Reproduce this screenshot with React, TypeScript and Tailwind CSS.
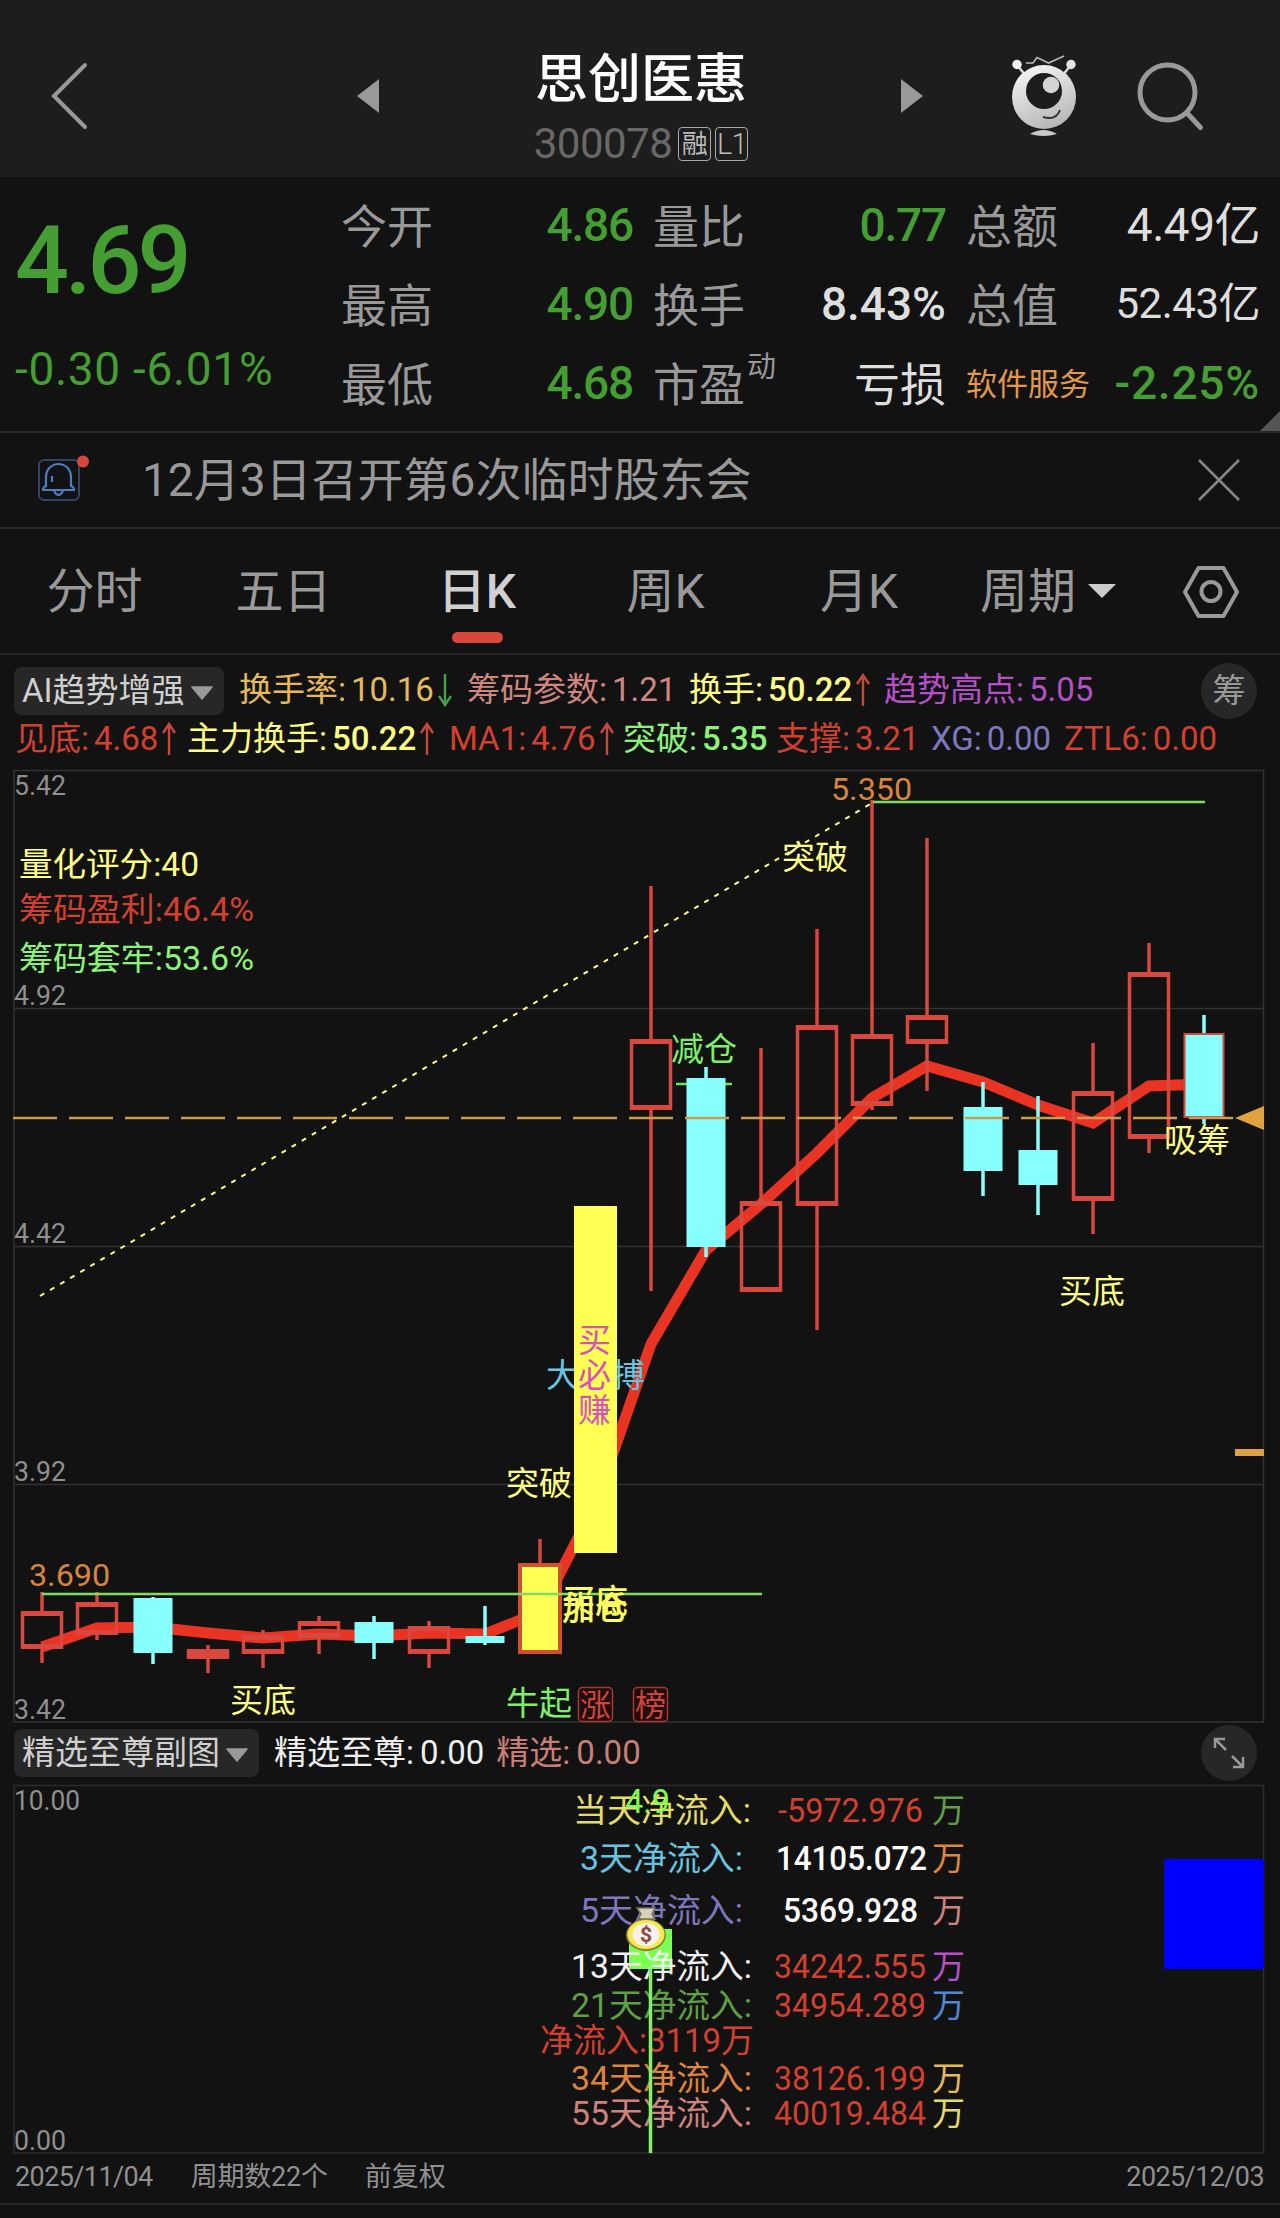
import React from 'react';

interface Quote {
  label: string;
  sup?: string;
  value: string;
  labelClass?: string;
  valueClass: string;
}

interface Indicator {
  name: string;
  value: string;
  width: string;
  color: string;
  bold?: boolean;
  trend?: 'up' | 'down';
}

interface Candle {
  high: number;
  top: number;
  bottom: number;
  low: number;
  kind: 'up' | 'down' | 'signal' | 'solid' | 'last';
}

const GREEN = 'text-[#459e31] font-medium tracking-[-1.2px]';
const LIGHT = 'text-[#dedede] font-medium tracking-[0px]';

const quoteColumns: { width: string; rows: Quote[] }[] = [
  {
    width: 'w-[292px]',
    rows: [
      { label: '今开', value: '4.86', valueClass: GREEN },
      { label: '最高', value: '4.90', valueClass: GREEN },
      { label: '最低', value: '4.68', valueClass: GREEN },
    ],
  },
  {
    width: 'w-[293px]',
    rows: [
      { label: '量比', value: '0.77', valueClass: GREEN },
      { label: '换手', value: '8.43%', valueClass: LIGHT },
      { label: '市盈', sup: '动', value: '亏损', valueClass: 'text-[#dedede] pt-1' },
    ],
  },
  {
    width: 'w-[294px]',
    rows: [
      { label: '总额', value: '4.49亿', valueClass: 'text-[#dedede] text-[46px] tracking-[-0.5px]' },
      { label: '总值', value: '52.43亿', valueClass: 'text-[#dedede] text-[42px] tracking-[-0.5px]' },
      { label: '软件服务', value: '-2.25%', labelClass: 'text-[#e09850] text-[31px]', valueClass: 'text-[#459e31] font-medium tracking-[0.8px]' },
    ],
  },
];

const tabs = [
  { name: '分时', width: 'w-[189px]' },
  { name: '五日', width: 'w-[189px]' },
  { name: '日K', width: 'w-[198px]', active: true },
  { name: '周K', width: 'w-[179px]' },
  { name: '月K', width: 'w-[208px]' },
];

const indicatorsTop: Indicator[] = [
  { name: '换手率', value: '10.16', width: 'w-[228px]', color: 'text-[#e5b85a]', trend: 'down' },
  { name: '筹码参数', value: '1.21', width: 'w-[222px]', color: 'text-[#d08680]' },
  { name: '换手', value: '50.22', width: 'w-[195px]', color: 'text-[#ffff84]', bold: true, trend: 'up' },
  { name: '趋势高点', value: '5.05', width: 'w-[220px]', color: 'text-[#b44fc6]' },
];

const indicatorsBottom: Indicator[] = [
  { name: '见底', value: '4.68', width: 'w-[172px]', color: 'text-[#d3402f]', trend: 'up' },
  { name: '主力换手', value: '50.22', width: 'w-[262px]', color: 'text-[#ffff84]', bold: true, trend: 'up' },
  { name: 'MA1', value: '4.76', width: 'w-[174px]', color: 'text-[#d3402f]', trend: 'up' },
  { name: '突破', value: '5.35', width: 'w-[153px]', color: 'text-[#8cf27a]', bold: true },
  { name: '支撑', value: '3.21', width: 'w-[155px]', color: 'text-[#d3402f]' },
  { name: 'XG', value: '0.00', width: 'w-[133px]', color: 'text-[#7d78bd]' },
  { name: 'ZTL6', value: '0.00', width: 'w-[160px]', color: 'text-[#d3402f]' },
];

const candles: Candle[] = [
  { high: 1592, top: 1611, bottom: 1649, low: 1663, kind: 'up' },
  { high: 1592, top: 1602, bottom: 1635, low: 1640, kind: 'up' },
  { high: 1597, top: 1598, bottom: 1653, low: 1664, kind: 'down' },
  { high: 1645, top: 1649, bottom: 1659, low: 1673, kind: 'up' },
  { high: 1630, top: 1635, bottom: 1654, low: 1668, kind: 'up' },
  { high: 1616, top: 1621, bottom: 1638, low: 1654, kind: 'up' },
  { high: 1616, top: 1622, bottom: 1643, low: 1659, kind: 'down' },
  { high: 1621, top: 1626, bottom: 1654, low: 1668, kind: 'up' },
  { high: 1606, top: 1636, bottom: 1643, low: 1645, kind: 'down' },
  { high: 1539, top: 1563, bottom: 1654, low: 1654, kind: 'signal' },
  { high: 1206, top: 1206, bottom: 1553, low: 1553, kind: 'solid' },
  { high: 886, top: 1039, bottom: 1110, low: 1291, kind: 'up' },
  { high: 1067, top: 1078, bottom: 1247, low: 1257, kind: 'down' },
  { high: 1048, top: 1201, bottom: 1292, low: 1292, kind: 'up' },
  { high: 929, top: 1025, bottom: 1206, low: 1330, kind: 'up' },
  { high: 800, top: 1034, bottom: 1106, low: 1110, kind: 'up' },
  { high: 838, top: 1015, bottom: 1044, low: 1091, kind: 'up' },
  { high: 1082, top: 1107, bottom: 1171, low: 1196, kind: 'down' },
  { high: 1096, top: 1150, bottom: 1185, low: 1215, kind: 'down' },
  { high: 1043, top: 1091, bottom: 1201, low: 1234, kind: 'up' },
  { high: 943, top: 972, bottom: 1139, low: 1153, kind: 'up' },
  { high: 1015, top: 1034, bottom: 1117, low: 1124, kind: 'last' },
];

const maValues = [
  1647, 1628, 1627, 1633, 1638, 1634, 1636, 1633, 1634, 1612, 1505, 1344, 1250, 1204, 1153, 1098, 1066, 1082, 1105, 1123,
  1086, 1084,
];

const candleX = (i: number) => Math.round(42 + i * 55.33);

const flows = [
  { y: 1822, label: '当天净流入:', x: 573, w: 178, color: '#e3dc66', value: '-5972.976', vx: 778, vw: 145, vColor: '#d3402f', unit: '#5f9f45' },
  { y: 1870, label: '3天净流入:', x: 580, w: 163, color: '#69c3e0', value: '14105.072', vx: 776, vw: 151, vColor: '#ffffff', unit: '#de8440' },
  { y: 1922, label: '5天净流入:', x: 580, w: 163, color: '#7d78bd', value: '5369.928', vx: 783, vw: 135, vColor: '#ffffff', unit: '#cf827c' },
  { y: 1978, label: '13天净流入:', x: 571, w: 181, color: '#f2f2f2', value: '34242.555', vx: 774, vw: 152, vColor: '#d3402f', unit: '#b44fc6' },
  { y: 2017, label: '21天净流入:', x: 571, w: 181, color: '#5f9f45', value: '34954.289', vx: 774, vw: 152, vColor: '#d3402f', unit: '#4f87d6' },
  { y: 2090, label: '34天净流入:', x: 571, w: 181, color: '#de8440', value: '38126.199', vx: 774, vw: 152, vColor: '#d3402f', unit: '#e5b85a' },
  { y: 2125, label: '55天净流入:', x: 571, w: 181, color: '#cf827c', value: '40019.484', vx: 774, vw: 152, vColor: '#d3402f', unit: '#e3dc66' },
];

interface NoteProps {
  x: number;
  y: number;
  w: number;
  color: string;
  size?: number;
  weight?: number;
  children: React.ReactNode;
}

function Note({ x, y, w, color, size = 33, weight = 400, children }: NoteProps) {
  return (
    <text x={x} y={y} fill={color} fontSize={size} fontWeight={weight} textLength={w} lengthAdjust="spacingAndGlyphs">
      {children}
    </text>
  );
}

function TrendArrow({ trend }: { trend: 'up' | 'down' }) {
  const up = trend === 'up';
  return (
    <svg width="16" height="34" viewBox="0 0 16 34" fill="none" stroke={up ? '#c9463c' : '#4a9d4f'} strokeWidth="2.4">
      <path d={up ? 'M8 33V2M2 11L8 2L14 11' : 'M8 1V32M2 23L8 32L14 23'} />
    </svg>
  );
}

function IndicatorItem({ item }: { item: Indicator }) {
  return (
    <div className={`flex shrink-0 items-center whitespace-nowrap text-[33px] leading-10 ${item.width} ${item.color}`}>
      <span>{item.name}:</span>
      <span className={`ml-[5px] ${item.bold ? 'font-medium' : ''}`}>{item.value}</span>
      {item.trend && (
        <span className="ml-[3px]">
          <TrendArrow trend={item.trend} />
        </span>
      )}
    </div>
  );
}

function PickerButton({ label, width }: { label: string; width: string }) {
  return (
    <button className={`flex h-12 shrink-0 items-center whitespace-nowrap rounded-lg bg-[#272727] pl-2 text-[33px] leading-10 text-[#d0d0d0] ${width}`}>
      {label}
      <svg className="ml-1.5 mt-1" width="22" height="14" viewBox="0 0 22 14">
        <path d="M1 1H21L11 13Z" fill="#999" stroke="#999" strokeWidth="1.5" strokeLinejoin="round" />
      </svg>
    </button>
  );
}

function CandleShape({ candle, x }: { candle: Candle; x: number }) {
  const { high, top, bottom, low, kind } = candle;
  const height = bottom - top;
  if (kind === 'solid') {
    return <rect x={574} y={top} width={43} height={height} fill="#ffff54" />;
  }
  if (kind === 'signal') {
    return (
      <g>
        <path d={`M${x} ${high}V${top}`} stroke="#d0473c" strokeWidth="3.5" />
        <rect x={x - 20} y={top + 2} width={40} height={height - 4} fill="#ffff54" stroke="#d2502f" strokeWidth="4" />
      </g>
    );
  }
  if (kind === 'up') {
    return (
      <g stroke="#d8483f" fill="none">
        <path d={`M${x} ${high}V${top}M${x} ${bottom}V${low}`} strokeWidth="3.5" />
        <path d={`M${x - 19.5} ${top}V${bottom}M${x + 19.5} ${top}V${bottom}`} strokeWidth="3.5" />
        <path d={`M${x - 21} ${top + 2.5}H${x + 21}M${x - 21} ${bottom - 2.5}H${x + 21}`} strokeWidth="5" />
      </g>
    );
  }
  return (
    <g>
      <path d={`M${x} ${high}V${low}`} stroke="#88ffff" strokeWidth="3.5" />
      <rect
        x={x - 19.5}
        y={top}
        width={39}
        height={height}
        fill="#88ffff"
        stroke={kind === 'last' ? '#d8483f' : 'none'}
        strokeWidth="2"
      />
    </g>
  );
}

function Header() {
  return (
    <header className="flex h-[177px] items-start bg-[#1d1d1d]">
      <svg className="ml-[50px] mt-[62px]" width="38" height="68" viewBox="0 0 38 68" fill="none" stroke="#999" strokeWidth="4">
        <path d="M35 3L4 34L35 65" strokeLinecap="round" />
      </svg>
      <svg className="ml-[269px] mt-[79px]" width="22" height="34" viewBox="0 0 22 34" fill="#999">
        <path d="M0 17L22 0V34Z" />
      </svg>
      <div className="ml-[154px] mt-[50px] flex w-[216px] flex-col items-center">
        <h1 className="whitespace-nowrap text-[53px] font-medium leading-[60px] text-white">思创医惠</h1>
        <div className="mt-4 flex h-9 items-center gap-1 text-[#bbb]">
          <span className="mr-0.5 text-[42px] leading-9 tracking-[-0.5px] text-[#686868]">300078</span>
          <span className="flex h-[34px] w-[33px] shrink-0 items-center justify-center rounded border border-[#aaa] text-[26px] leading-8">融</span>
          <span className="flex h-[34px] w-[33px] shrink-0 items-center justify-center rounded border border-[#aaa] text-[29px] font-light leading-8 tracking-[-1px]">L1</span>
        </div>
      </div>
      <svg className="ml-[152px] mt-[79px]" width="22" height="34" viewBox="0 0 22 34" fill="#999">
        <path d="M22 17L0 0V34Z" />
      </svg>
      {/* Assistant mascot */}
      <svg className="ml-[87px] mt-[50px]" width="68" height="90" viewBox="1010 50 68 90" fill="none">
        <defs>
          <linearGradient id="mascot" x1="0.3" y1="0" x2="0.7" y2="1">
            <stop offset="0" stopColor="#f4f4f4" />
            <stop offset="1" stopColor="#b4b4b4" />
          </linearGradient>
        </defs>
        <path d="M1017 65L1026 76M1071 65L1062 76" stroke="#ddd" strokeWidth="2.5" />
        <circle cx="1017" cy="64.5" r="4.7" fill="#f4f4f4" />
        <circle cx="1071" cy="64.5" r="4.7" fill="#e4e4e4" />
        <path d="M1026 63H1033L1037 57.5L1048.5 63L1064 56" stroke="#b8b8b8" strokeWidth="1.6" />
        <circle cx="1044" cy="97" r="32" fill="url(#mascot)" />
        <circle cx="1044" cy="91" r="18" fill="#1d1d1d" />
        <circle cx="1051" cy="85" r="8.3" fill="#d4d4d4" />
        <path d="M1043 117Q1056 121 1060 110" stroke="#333" strokeWidth="2" />
        <path d="M1030 134Q1043.5 126 1057 134Q1043.5 138 1030 134Z" fill="#c8c8c8" />
      </svg>
      <svg className="ml-[57px] mt-[60px]" width="70" height="72" viewBox="0 0 70 72" fill="none" stroke="#999" strokeWidth="5">
        <circle cx="32.5" cy="32.5" r="27.5" />
        <path d="M52 53L65.5 67.5" strokeLinecap="round" />
      </svg>
    </header>
  );
}

function QuotePanel() {
  return (
    <section className="relative flex h-[256px] border-b-2 border-[#262626]">
      <div className="w-[341px] shrink-0 whitespace-nowrap pl-[15px] pt-9 text-[#459e31]">
        <p className="text-[95px] font-medium leading-[96px] tracking-[-4px]">4.69</p>
        <p className="mt-9 text-[46px] leading-[48px] tracking-[0.7px]">-0.30 -6.01%</p>
      </div>
      <div className="flex gap-5 pt-2.5">
        {quoteColumns.map((column, i) => (
          <div key={i} className={column.width}>
            {column.rows.map(row => (
              <div key={row.label} className="flex h-[79px] items-center justify-between whitespace-nowrap text-[46px] leading-[60px]">
                <span className={`relative ${row.labelClass ?? 'text-[#999]'}`}>
                  {row.label}
                  {row.sup && <span className="absolute -top-[18px] left-[94px] text-[29px]">{row.sup}</span>}
                </span>
                <span className={`pb-1 ${row.valueClass}`}>{row.value}</span>
              </div>
            ))}
          </div>
        ))}
      </div>
      <svg className="absolute bottom-0 right-0" width="20" height="20" viewBox="0 0 20 20">
        <path d="M20 0V20H0Z" fill="#555" />
      </svg>
    </section>
  );
}

function NoticeBar() {
  return (
    <section className="flex h-24 items-center border-b-2 border-[#262626] pl-[38px]">
      <svg className="mb-1" width="54" height="48" viewBox="38 454 54 48" fill="none" stroke="#4a7fc4" strokeWidth="2.2">
        <rect x="39" y="460" width="40" height="40" rx="5" stroke="#2f4569" strokeWidth="2" />
        <path d="M46 486V477C46 469 52 464 58.500 464S71 469 71 477V486Q74 487 74 490H43Q43 487 46 486Z" strokeLinejoin="round" />
        <path d="M54 491Q58.500 499 63 491M52 476V482" />
        <circle cx="83" cy="461.500" r="6" fill="#d8473f" stroke="none" />
      </svg>
      <p className="ml-[50px] whitespace-nowrap text-[46px] leading-[60px] text-[#999]">12月3日召开第6次临时股东会</p>
      <svg className="ml-auto mr-10" width="42" height="42" viewBox="0 0 42 42" stroke="#888" strokeWidth="2.5">
        <path d="M1 1L41 41M41 1L1 41" />
      </svg>
    </section>
  );
}

function TabBar() {
  return (
    <nav className="flex h-[126px] border-b-2 border-[#262626] pt-[35px] text-[48px] leading-[56px] text-[#999]">
      {tabs.map(tab => (
        <div key={tab.name} className={`flex shrink-0 flex-col items-center ${tab.width}`}>
          <span className={tab.active ? 'font-medium text-[#d0d0d0]' : ''}>{tab.name}</span>
          {tab.active && <span className="mt-3 h-[11px] w-[51px] rounded-full bg-[#d8473b]" />}
        </div>
      ))}
      <span className="ml-[17px] whitespace-nowrap">周期</span>
      <svg className="ml-3 mt-5" width="28" height="14" viewBox="0 0 28 14" fill="#ccc">
        <path d="M0 0H28L14 14Z" />
      </svg>
      <svg className="ml-[66px] mt-px" width="58" height="54" viewBox="0 0 58 54" fill="none" stroke="#999" strokeWidth="4">
        <path d="M16.500 3H41.500L55 27L41.500 51H16.500L3 27Z" strokeLinejoin="round" />
        <circle cx="29" cy="26.500" r="9.500" />
      </svg>
    </nav>
  );
}

function MainChart() {
  const ma = maValues.map((y, i) => `${candleX(i)},${y}`).join(' ');
  return (
    <svg className="block" width="1280" height="965" viewBox="0 760 1280 965">
      {/* Frame and price grid */}
      <g stroke="#333" strokeWidth="1.5" fill="none">
        <path d="M14 770.500H1263.500V1722H14Z" />
        <path d="M14 1008.500H1263.500M14 1246.500H1263.500M14 1484.500H1263.500" />
      </g>
      <Note x={14} y={795} w={52} size={28} color="#8f8f8f">5.42</Note>
      <Note x={14} y={1005} w={52} size={28} color="#8f8f8f">4.92</Note>
      <Note x={14} y={1243} w={52} size={28} color="#8f8f8f">4.42</Note>
      <Note x={14} y={1481} w={52} size={28} color="#8f8f8f">3.92</Note>
      <Note x={14} y={1719} w={52} size={28} color="#8f8f8f">3.42</Note>

      <path d="M40 1296L872 803" stroke="#ffff84" strokeWidth="2" strokeDasharray="5 6.700" />
      <path d="M676 1084H732" stroke="#6fe05c" strokeWidth="2.5" />
      <polyline points={ma} fill="none" stroke="#e93323" strokeWidth="11" />
      <Note x={546} y={1387} w={33} color="#6cc5e0">大</Note>
      <Note x={612} y={1387} w={33} color="#6cc5e0">搏</Note>

      {candles.map((candle, i) => (
        <CandleShape key={i} candle={candle} x={candleX(i)} />
      ))}

      <path d="M42 1594H762" stroke="#7fdc62" strokeWidth="2.5" />
      <path d="M873 802H1205" stroke="#7fdc62" strokeWidth="2.5" />
      <path d="M13 1118H1233" stroke="#d09a4c" strokeWidth="2.5" strokeDasharray="44 12" />
      <path d="M1235 1118L1264 1106V1130Z" fill="#e0a23c" />
      <path d="M1235 1452.500H1264" stroke="#dda245" strokeWidth="7" />

      {/* Signals */}
      <Note x={19} y={876} w={180} color="#ffff84">量化评分:40</Note>
      <Note x={19} y={921} w={235} color="#d3402f">筹码盈利:46.4%</Note>
      <Note x={19} y={970} w={235} color="#8cf27a">筹码套牢:53.6%</Note>
      <Note x={831} y={800} w={81} size={32} color="#d9843f">5.350</Note>
      <Note x={29} y={1586} w={81} size={32} color="#d9843f">3.690</Note>
      <Note x={782} y={869} w={66} color="#ffff84">突破</Note>
      <Note x={671} y={1061} w={66} color="#7cf06a">减仓</Note>
      <Note x={1164} y={1152} w={66} color="#ffff84">吸筹</Note>
      <Note x={1059} y={1303} w={66} color="#ffff84">买底</Note>
      <Note x={230} y={1712} w={66} color="#ffff84">买底</Note>
      <Note x={506} y={1495} w={66} color="#ffff84">突破</Note>
      <Note x={562} y={1613} w={66} weight={500} color="#ffff60">买底</Note>
      <Note x={562} y={1620} w={66} weight={500} color="#ffff60">加仓</Note>
      <Note x={578} y={1352} w={33} color="#d94fc0">买</Note>
      <Note x={578} y={1387} w={33} color="#d94fc0">必</Note>
      <Note x={578} y={1422} w={33} color="#d94fc0">赚</Note>
      <Note x={506} y={1715} w={66} color="#7cf06a">牛起</Note>
      <rect x={578.500} y={1687.500} width={34} height={34} rx={4} fill="#200c0a" stroke="#a83a33" strokeWidth="1.5" />
      <rect x={633.500} y={1687.500} width={34} height={34} rx={4} fill="#200c0a" stroke="#a83a33" strokeWidth="1.5" />
      <Note x={580} y={1716} w={31} size={31} color="#cf453b">涨</Note>
      <Note x={635} y={1716} w={31} size={31} color="#cf453b">榜</Note>
    </svg>
  );
}

function FlowChart() {
  return (
    <svg className="block" width="1280" height="376" viewBox="0 1781 1280 376">
      <path d="M14 2153V1785.500H1263.500V2153" fill="none" stroke="#2c2c2c" strokeWidth="1.500" />
      <path d="M13 2153H1264" stroke="#262626" strokeWidth="2" />
      <Note x={14} y={1810} w={66} size={28} color="#8f8f8f">10.00</Note>
      <Note x={14} y={2150} w={52} size={28} color="#8f8f8f">0.00</Note>
      <rect x={1164} y={1859} width={100} height={110} fill="#0000ff" />

      <rect x={629} y={1929} width={43} height={40} fill="#7bff50" />
      {flows.map(flow => (
        <g key={flow.y}>
          <Note x={flow.x} y={flow.y} w={flow.w} color={flow.color}>{flow.label}</Note>
          <Note x={flow.vx} y={flow.y} w={flow.vw} weight={flow.vColor === '#ffffff' ? 500 : 400} color={flow.vColor}>{flow.value}</Note>
          <Note x={932} y={flow.y} w={33} color={flow.unit}>万</Note>
        </g>
      ))}
      <Note x={540} y={2052} w={214} color="#d3402f">净流入:3119万</Note>
      <path d="M650.500 1969V2153" stroke="#84f06a" strokeWidth="3.500" />
      <Note x={625} y={1813} w={45} color="#7bff50">4.9</Note>

      {/* Money bag */}
      <path d="M637 1908H655L652 1914L655 1919H638L641 1914Z" fill="#d8d0b8" stroke="#77705c" strokeWidth="1.500" />
      <ellipse cx={646} cy={1935} rx={20} ry={16} fill="#8c8438" />
      <ellipse cx={646} cy={1934.500} rx={18.500} ry={14.500} fill="#f4ea4c" />
      <ellipse cx={646} cy={1934.500} rx={13.500} ry={11.500} fill="#f6f0ea" />
      <text x={646} y={1942} textAnchor="middle" fontSize={21} fontWeight={700} fill="#8a4a44">$</text>
    </svg>
  );
}

export default function App() {
  return (
    <div className="h-[2218px] w-[1280px] overflow-hidden bg-[#121212] font-[Roboto,'Noto_Sans_CJK_SC',sans-serif]">
      <Header />
      <QuotePanel />
      <NoticeBar />
      <TabBar />

      <section className="h-[105px] pl-3.5 pt-2">
        <div className="flex h-14 items-center">
          <PickerButton label="AI趋势增强" width="w-[210px]" />
          <div className="ml-[15px] flex pb-0.5">
            {indicatorsTop.map(item => <IndicatorItem key={item.name} item={item} />)}
          </div>
          <span className="ml-auto mr-[23px] flex size-14 items-center justify-center rounded-full bg-[#272727] text-[33px] leading-10 text-[#999]">筹</span>
        </div>
        <div className="flex pl-px">
          {indicatorsBottom.map(item => <IndicatorItem key={item.name} item={item} />)}
        </div>
      </section>

      <MainChart />

      <div className="flex h-14 items-center whitespace-nowrap pl-3.5 text-[33px] leading-10">
        <PickerButton label="精选至尊副图" width="w-[245px]" />
        <span className="ml-[15px] text-[#eee]">精选至尊:</span>
        <span className="ml-1.5 text-[#eee]">0.00</span>
        <span className="ml-3 text-[#c97f78]">精选:</span>
        <span className="ml-1.5 text-[#c97f78]">0.00</span>
        <span className="ml-auto mr-[23px] flex size-14 items-center justify-center rounded-full bg-[#272727]">
          <svg width="32" height="32" viewBox="0 0 32 32" fill="none" stroke="#999" strokeWidth="2.500">
            <path d="M13 13L3 3M2 11V2H12M19 19L29 29M30 20V30H20" />
          </svg>
        </span>
      </div>

      <FlowChart />

      <footer className="flex h-12 items-center whitespace-nowrap border-b-2 border-[#262626] pb-1.5 pl-[15px] pr-4 text-[27px] leading-9 text-[#909090]">
        <span className="tracking-[-0.6px]">2025/11/04</span>
        <span className="ml-[38px] tracking-[-0.2px]">周期数22个</span>
        <span className="ml-[37px]">前复权</span>
        <span className="ml-auto tracking-[-0.6px]">2025/12/03</span>
      </footer>
    </div>
  );
}
